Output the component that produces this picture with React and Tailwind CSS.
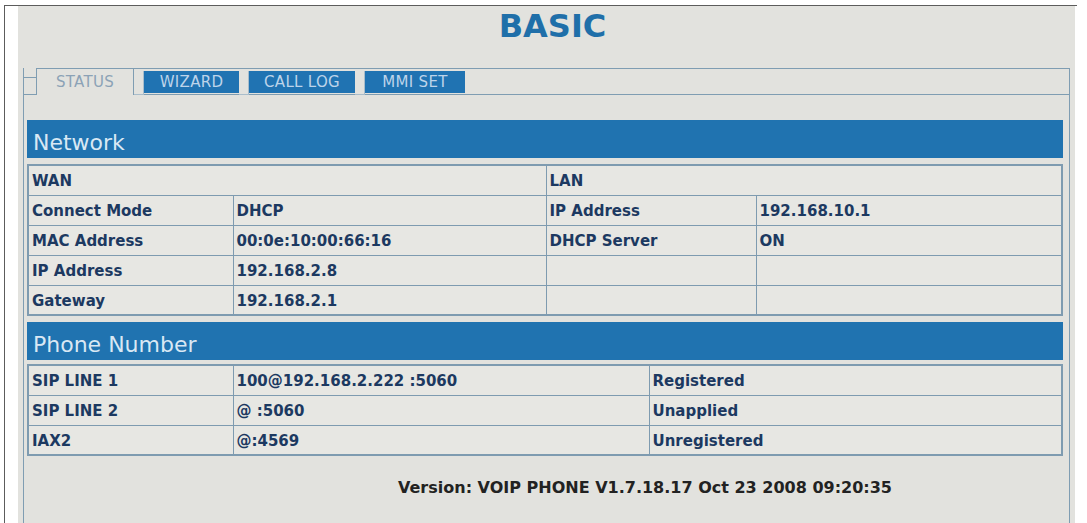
import React from "react";

const wanRows = [
  ["Connect Mode", "DHCP", "IP Address", "192.168.10.1"],
  ["MAC Address", "00:0e:10:00:66:16", "DHCP Server", "ON"],
  ["IP Address", "192.168.2.8", "", ""],
  ["Gateway", "192.168.2.1", "", ""],
];

const phoneRows = [
  ["SIP LINE 1", "100@192.168.2.222 :5060", "Registered"],
  ["SIP LINE 2", "@ :5060", "Unapplied"],
  ["IAX2", "@:4569", "Unregistered"],
];

const cell =
  "h-[30px] border border-[#7e9bb0] px-[3px] pt-[2px] text-left align-middle font-bold text-[15px] text-[#1c3961]";

const BlueTab = ({ label, width }) => (
  <div className={`${width} border-b border-[#7f9db2] pt-[2px] pb-[1px]`}>
    <div className="h-full bg-[#2073b2] flex items-center justify-center text-[15px] text-[#bdd4ea] tracking-[0.3px]">
      {label}
    </div>
  </div>
);

const Sep = () => <div className="w-[10px] border-b border-r border-[#a9bdcb] mt-[2px]" />;

const SectionHeader = ({ title }) => (
  <div className="h-[38px] bg-[#2073b0] flex items-center pt-[6px] pl-[6px] text-[22px] text-[#d9e8f4]">
    {title}
  </div>
);

export default function App() {
  return (
    <div
      className="min-h-screen bg-white pt-[5px] pl-[4px] overflow-hidden"
      style={{ fontFamily: '"DejaVu Sans", Verdana, sans-serif' }}
    >
      <div className="w-[1073px] h-[518px] border-t border-l border-[#5c5c5c] pl-[13px] pr-[2px]">
        <div className="h-full bg-[#e2e2de] px-[5px]">
          <div className="h-[62px] pl-[12px] text-center text-[32px] leading-[40px] font-bold text-[#1f6fa9]">
            BASIC
          </div>
          <div className="h-[460px] border-x border-b border-[#7f9db2]">
            <div className="flex h-[27px]">
              <div className="w-[12px] mt-[9px] border-t border-b border-[#7f9db2]" />
              <div className="flex-1 flex border-t border-[#7f9db2]">
                <div className="w-[98px] border-x border-[#7f9db2] flex items-center justify-center text-[15px] text-[#8ca2b6] tracking-[0.3px]">
                  STATUS
                </div>
                <Sep />
                <BlueTab label="WIZARD" width="w-[95px]" />
                <Sep />
                <BlueTab label="CALL LOG" width="w-[106px]" />
                <Sep />
                <BlueTab label="MMI SET" width="w-[100px]" />
                <div className="flex-1 border-b border-[#7f9db2]" />
              </div>
            </div>

            <div className="pl-[3px] pr-[6px] pt-[25px]">
              <SectionHeader title="Network" />
              <table className="mt-[6px] w-full border-collapse border-2 border-[#7e9bb0] bg-[#e7e7e3]">
                <colgroup>
                  <col className="w-[205px]" />
                  <col className="w-[313px]" />
                  <col className="w-[210px]" />
                  <col />
                </colgroup>
                <tbody>
                  <tr>
                    <td colSpan={2} className={cell}>WAN</td>
                    <td colSpan={2} className={cell}>LAN</td>
                  </tr>
                  {wanRows.map((r, i) => (
                    <tr key={i}>
                      {r.map((c, j) => (
                        <td key={j} className={cell}>{c}</td>
                      ))}
                    </tr>
                  ))}
                </tbody>
              </table>

              <div className="mt-[6px]">
                <SectionHeader title="Phone Number" />
              </div>
              <table className="mt-[4px] w-full border-collapse border-2 border-[#7e9bb0] bg-[#e7e7e3]">
                <colgroup>
                  <col className="w-[205px]" />
                  <col className="w-[416px]" />
                  <col />
                </colgroup>
                <tbody>
                  {phoneRows.map((r, i) => (
                    <tr key={i}>
                      {r.map((c, j) => (
                        <td key={j} className={cell}>{c}</td>
                      ))}
                    </tr>
                  ))}
                </tbody>
              </table>

              <div className="mt-[20px] pl-[200px] text-center text-[16px] font-bold text-[#222]">
                Version: VOIP PHONE V1.7.18.17 Oct 23 2008 09:20:35
              </div>
            </div>
          </div>
        </div>
      </div>
    </div>
  );
}
